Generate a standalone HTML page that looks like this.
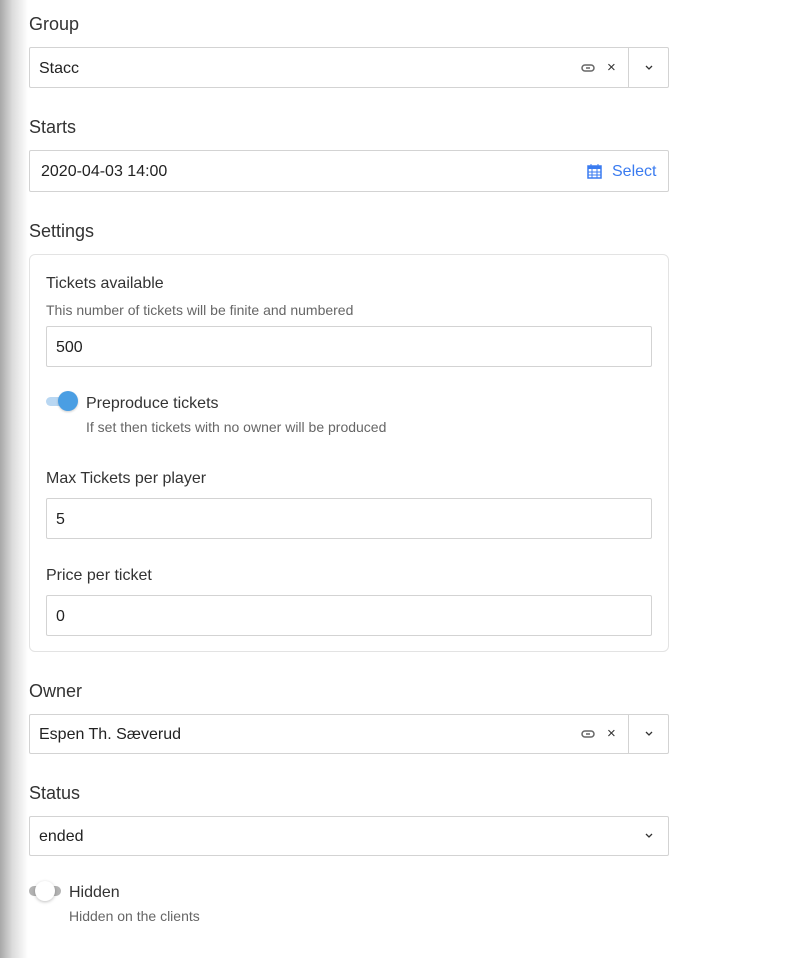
<!DOCTYPE html>
<html><head><style>
body{margin:0;width:788px;height:958px;background:#fff;font-family:"Liberation Sans",sans-serif;color:#333;position:relative;overflow:hidden}
.sh{position:absolute;left:0;top:0;width:28px;height:958px;background:linear-gradient(to right,#a8a8a8,#dcdcdc 45%,#fff)}
.a{position:absolute}
.lbl{font-size:18px;color:#333}
.in{position:absolute;border:1px solid #d3d3d3;border-radius:2px;box-sizing:border-box;background:#fff;font-size:16px;color:#222}
.in span.t{position:absolute;left:9px;top:50%;transform:translateY(-45%)}
.sm{font-size:16px;color:#333}
.hp{font-size:14px;color:#666}
</style></head><body>
<div class="sh"></div>
<div class="a lbl" style="left:29px;top:14px">Group</div>
<div class="in" style="left:29px;top:47px;width:640px;height:41px"><span class="t">Stacc</span>
<svg class="a" style="left:551px;top:15px" width="14" height="10" viewBox="0 0 14 10"><rect x="1" y="2" width="12" height="6" rx="3" fill="none" stroke="#666" stroke-width="1.5"/><line x1="5" y1="5" x2="9" y2="5" stroke="#666" stroke-width="1.5"/></svg>
<span class="a" style="left:577px;top:11px;font-size:15px;color:#333">×</span>
<div class="a" style="left:598px;top:0;width:1px;height:39px;background:#d3d3d3"></div>
<svg class="a" style="left:614px;top:16px" width="10" height="8" viewBox="0 0 10 8"><path d="M2 2l3 3 3-3" fill="none" stroke="#333" stroke-width="1.3"/></svg>
</div>
<div class="a lbl" style="left:29px;top:117px">Starts</div>
<div class="in" style="left:29px;top:150px;width:640px;height:42px"><span class="t" style="left:11px">2020-04-03 14:00</span>
<svg class="a" style="left:557px;top:12px" width="15" height="16" viewBox="0 0 15 16"><rect x="1" y="3" width="13" height="12" fill="none" stroke="#3a7bf0" stroke-width="1.5"/><rect x="1" y="3" width="13" height="3" fill="#3a7bf0"/><path d="M4 1v4M11 1v4M1 9h13M1 12h13M5 6v9M10 6v9" stroke="#3a7bf0" stroke-width="1"/></svg>
<span class="a" style="left:582px;top:12px;color:#3a7bf0">Select</span>
</div>
<div class="a lbl" style="left:29px;top:221px">Settings</div>
<div class="a" style="left:29px;top:254px;width:640px;height:398px;border:1px solid #e3e3e3;border-radius:6px;box-sizing:border-box"></div>
<div class="a sm" style="left:46px;top:275px">Tickets available</div>
<div class="a hp" style="left:46px;top:302px">This number of tickets will be finite and numbered</div>
<div class="in" style="left:46px;top:326px;width:606px;height:41px"><span class="t">500</span></div>
<div class="a" style="left:46px;top:397px;width:26px;height:9px;border-radius:5px;background:#b9d7f2"></div>
<div class="a" style="left:58px;top:391px;width:20px;height:20px;border-radius:50%;background:#4a9ee3;box-shadow:0 1px 2px rgba(0,0,0,.2)"></div>
<div class="a sm" style="left:86px;top:395px">Preproduce tickets</div>
<div class="a hp" style="left:86px;top:419px">If set then tickets with no owner will be produced</div>
<div class="a sm" style="left:46px;top:470px">Max Tickets per player</div>
<div class="in" style="left:46px;top:498px;width:606px;height:41px"><span class="t">5</span></div>
<div class="a sm" style="left:46px;top:567px">Price per ticket</div>
<div class="in" style="left:46px;top:595px;width:606px;height:41px"><span class="t">0</span></div>
<div class="a lbl" style="left:29px;top:681px">Owner</div>
<div class="in" style="left:29px;top:714px;width:640px;height:40px"><span class="t">Espen Th. Sæverud</span>
<svg class="a" style="left:551px;top:14px" width="14" height="10" viewBox="0 0 14 10"><rect x="1" y="2" width="12" height="6" rx="3" fill="none" stroke="#666" stroke-width="1.5"/><line x1="5" y1="5" x2="9" y2="5" stroke="#666" stroke-width="1.5"/></svg>
<span class="a" style="left:577px;top:10px;font-size:15px;color:#333">×</span>
<div class="a" style="left:598px;top:0;width:1px;height:38px;background:#d3d3d3"></div>
<svg class="a" style="left:614px;top:15px" width="10" height="8" viewBox="0 0 10 8"><path d="M2 2l3 3 3-3" fill="none" stroke="#333" stroke-width="1.3"/></svg>
</div>
<div class="a lbl" style="left:29px;top:783px">Status</div>
<div class="in" style="left:29px;top:816px;width:640px;height:40px"><span class="t">ended</span>
<svg class="a" style="left:614px;top:15px" width="10" height="8" viewBox="0 0 10 8"><path d="M2 2l3 3 3-3" fill="none" stroke="#333" stroke-width="1.3"/></svg>
</div>
<div class="a" style="left:29px;top:886px;width:32px;height:10px;border-radius:5px;background:#b3b3b3"></div>
<div class="a" style="left:35px;top:881px;width:20px;height:20px;border-radius:50%;background:#fff;box-shadow:0 1px 3px rgba(0,0,0,.25)"></div>
<div class="a sm" style="left:69px;top:884px">Hidden</div>
<div class="a hp" style="left:69px;top:908px">Hidden on the clients</div>
</body></html>
